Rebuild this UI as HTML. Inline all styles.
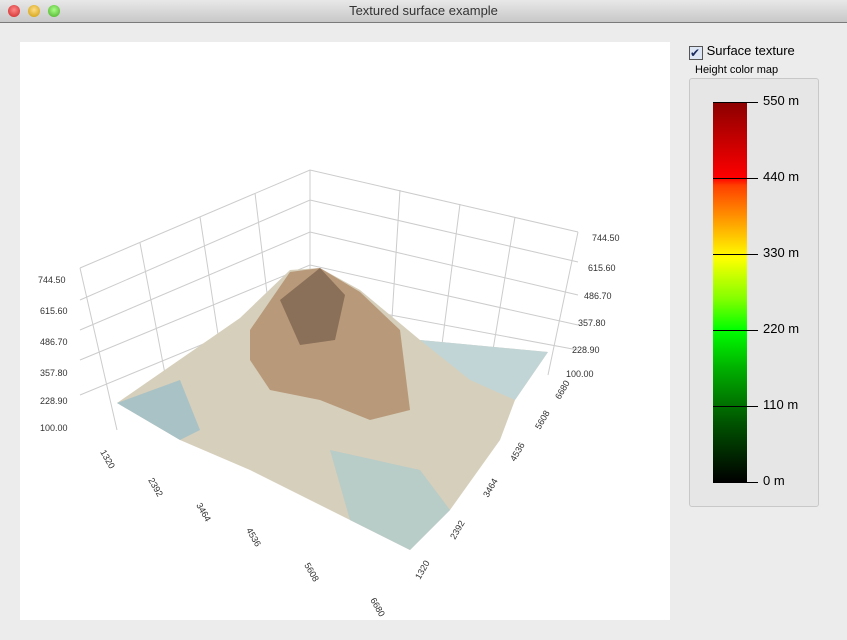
<!DOCTYPE html>
<html><head><style>
body{margin:0;width:847px;height:640px;background:#ececec;font-family:"Liberation Sans",sans-serif;overflow:hidden;position:relative}
.tb{position:absolute;left:0;top:0;width:847px;height:22px;background:linear-gradient(#e8e8e8,#c8c8c8);border-bottom:1px solid #7a7a7a;text-align:center;font-size:13px;line-height:22px;color:#333}
.dot{position:absolute;top:5px;width:12px;height:12px;border-radius:50%}
.plot{position:absolute;left:20px;top:42px;width:650px;height:578px;background:#fff}
.chk{position:absolute;left:689px;top:43px;font-size:13px;color:#000}
.box{position:absolute;left:689px;top:78px;width:128px;height:427px;border:1px solid #c8c8c8;border-radius:3px;background:#e6e6e6}
.bar{position:absolute;left:713px;top:102px;width:34px;height:380px;background:linear-gradient(#8b0000 0%,#ff0000 20%,#ff4000 22%,#ffff00 41%,#80ff00 52%,#00ff00 60%,#00b000 70%,#005000 85%,#000 100%)}
.t{position:absolute;left:713px;width:45px;height:1px;background:#000}
.l{position:absolute;left:763px;font-size:13px}
</style></head><body>
<div class="tb">Textured surface example
<div class="dot" style="left:8px;background:radial-gradient(circle at 50% 40%,#f88,#c22)"></div>
<div class="dot" style="left:28px;background:radial-gradient(circle at 50% 40%,#fd8,#c90)"></div>
<div class="dot" style="left:48px;background:radial-gradient(circle at 50% 40%,#af8,#4a2)"></div></div>
<div class="plot"><svg width="650" height="578" viewBox="20 42 650 578" font-size="9" fill="#333">
<g stroke="#ccc" stroke-width="1" fill="none">
<path d="M80,268 L310,170 L578,232 M80,268 L117,430 M310,170 L310,332 M578,232 L548,375"/>
<path d="M80,300 L310,200 L578,262 M80,330 L310,232 L578,295 M80,360 L310,265 L578,325 M80,395 L310,300 L578,350"/>
<path d="M140,243 L170,400 M200,217 L225,380 M255,193 L275,360 M400,190 L390,350 M460,204 L440,360 M515,217 L490,368"/>
</g>
<polygon points="117,403 240,318 290,270 320,268 360,290 420,340 548,352 515,400 500,440 450,510 410,550 330,510 250,470 180,440" fill="#d6cfbb"/>
<polygon points="250,330 290,272 320,268 360,292 400,330 410,410 370,420 320,400 270,390 250,360" fill="#b8997a"/>
<polygon points="280,300 320,268 345,295 335,340 300,345" fill="#8a7058"/>
<polygon points="330,450 420,470 450,510 410,550 350,520" fill="#b8ccc8"/>
<polygon points="117,403 180,380 200,430 180,440" fill="#a9c2c6"/>
<polygon points="420,340 548,352 515,400 470,380" fill="#c2d5d6"/>
<text x="38" y="283">744.50</text><text x="40" y="314">615.60</text><text x="40" y="345">486.70</text><text x="40" y="376">357.80</text><text x="40" y="404">228.90</text><text x="40" y="431">100.00</text>
<text x="592" y="241">744.50</text><text x="588" y="271">615.60</text><text x="584" y="299">486.70</text><text x="578" y="326">357.80</text><text x="572" y="353">228.90</text><text x="566" y="377">100.00</text>
<text transform="translate(100,452) rotate(60)">1320</text><text transform="translate(148,480) rotate(60)">2392</text><text transform="translate(196,505) rotate(60)">3464</text><text transform="translate(246,530) rotate(60)">4536</text><text transform="translate(304,565) rotate(60)">5608</text><text transform="translate(370,600) rotate(60)">6680</text>
<text transform="translate(420,580) rotate(-60)">1320</text><text transform="translate(455,540) rotate(-60)">2392</text><text transform="translate(488,498) rotate(-60)">3464</text><text transform="translate(515,462) rotate(-60)">4536</text><text transform="translate(540,430) rotate(-60)">5608</text><text transform="translate(560,400) rotate(-60)">6680</text>
</svg></div>
<div class="chk"><span style="display:inline-block;width:12px;height:12px;border:1px solid #555;background:#dde6f5;vertical-align:-2px;font-size:12px;line-height:12px;color:#1a2b60">✔</span> Surface texture</div>
<div style="position:absolute;left:695px;top:64px;font-size:11px">Height color map</div>
<div class="box"></div>
<div class="bar"></div>
<div class="t" style="top:102px"></div><div class="t" style="top:178px"></div><div class="t" style="top:254px"></div><div class="t" style="top:330px"></div><div class="t" style="top:406px"></div><div class="t" style="top:482px"></div>
<div class="l" style="top:93px">550 m</div><div class="l" style="top:169px">440 m</div><div class="l" style="top:245px">330 m</div><div class="l" style="top:321px">220 m</div><div class="l" style="top:397px">110 m</div><div class="l" style="top:473px">0 m</div>
</body></html>
